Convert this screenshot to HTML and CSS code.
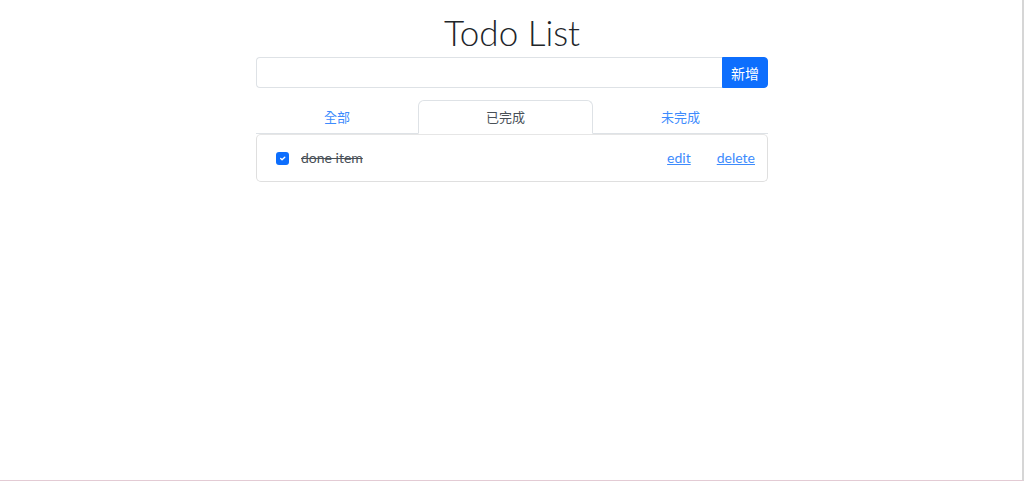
FILE: index.html
```html
<!DOCTYPE html>
<html lang="zh-Hant">
<head>
<meta charset="utf-8">
<title>Todo List</title>
<link rel="stylesheet" href="styles.css">
</head>
<body>
<div class="app">
  <h1 class="title">Todo List</h1>
  <div class="input-group">
    <input class="todo-input" type="text">
    <button class="add-btn">新增</button>
  </div>
  <ul class="tabs">
    <li class="tab"><a class="tab-link" href="#">全部</a></li>
    <li class="tab"><a class="tab-link active" href="#">已完成</a></li>
    <li class="tab"><a class="tab-link" href="#">未完成</a></li>
  </ul>
  <div class="card">
    <div class="item">
      <label class="check">
        <span class="box"><svg viewBox="0 0 20 20" width="9" height="9"><path d="M6 10l3 3 6-6" fill="none" stroke="#fff" stroke-width="3" stroke-linecap="round" stroke-linejoin="round"/></svg></span>
        <span class="item-text">done item</span>
      </label>
      <div class="actions">
        <a class="action" href="#">edit</a>
        <a class="action" href="#">delete</a>
      </div>
    </div>
  </div>
</div>
<div class="frame"></div>
</body>
</html>
```
FILE: styles.css
```css
* { box-sizing: border-box; }
html, body { margin: 0; height: 100%; }
body {
  font-family: Lato, "Noto Sans CJK TC", sans-serif;
  font-size: 14px;
  color: #212529;
  background: #fff;
}
.app {
  width: 512px;
  margin: 0 auto;
  padding-top: 8px;
}
.title {
  margin: 0 0 1px;
  text-align: center;
  font-size: 35px;
  font-weight: 300;
  line-height: 48px;
  color: #212529;
}
.input-group {
  display: flex;
  height: 31px;
}
.todo-input {
  flex: 1;
  border: 1px solid #dee2e6;
  border-right: none;
  border-radius: 4px 0 0 4px;
  padding: 4px 8px;
  font: inherit;
  outline: none;
}
.add-btn {
  width: 46px;
  border: 1px solid #0d6efd;
  background: #0d6efd;
  color: #fff;
  border-radius: 0 4px 4px 0;
  font-family: "Noto Sans CJK TC", sans-serif;
  font-size: 14px;
  padding: 0;
}
.tabs {
  display: flex;
  list-style: none;
  margin: 12px 0 0;
  padding: 0;
  border-bottom: 1px solid #dee2e6;
}
.tab {
  flex: 1 1 auto;
  display: flex;
}
.tab-link {
  flex: 1;
  text-align: center;
  padding: 5px 16px 6px;
  line-height: 21px;
  font-family: "Noto Sans CJK TC", sans-serif;
  font-size: 13px;
  color: #3d8bfd;
  text-decoration: none;
  border: 1px solid transparent;
  border-radius: 6px 6px 0 0;
  margin-bottom: -1px;
}
.tab-link.active {
  color: #495057;
  border-color: #dee2e6 #dee2e6 #fff;
  background: #fff;
}
.card {
  border: 1px solid #dfdfdf;
  border-top-color: #e6e6e6;
  border-radius: 5px;
}
.item {
  display: flex;
  align-items: center;
  justify-content: space-between;
  height: 46px;
  padding: 0 12px 0 19px;
}
.check {
  display: flex;
  align-items: center;
  gap: 12px;
}
.box {
  width: 13px;
  height: 13px;
  border-radius: 3px;
  background: #0d6efd;
  display: flex;
  align-items: center;
  justify-content: center;
}
.item-text {
  text-decoration: line-through;
  color: #495057;
  font-size: 14px;
  line-height: 20px;
}
.actions {
  display: flex;
  gap: 26px;
}
.action {
  color: #3d8bfd;
  text-decoration: underline;
  font-size: 14px;
  line-height: 20px;
}
.frame {
  position: fixed;
  inset: 0;
  pointer-events: none;
  border-right: 2px solid #d6d6d6;
  border-bottom: 1px solid #e3cbd4;
}
```
